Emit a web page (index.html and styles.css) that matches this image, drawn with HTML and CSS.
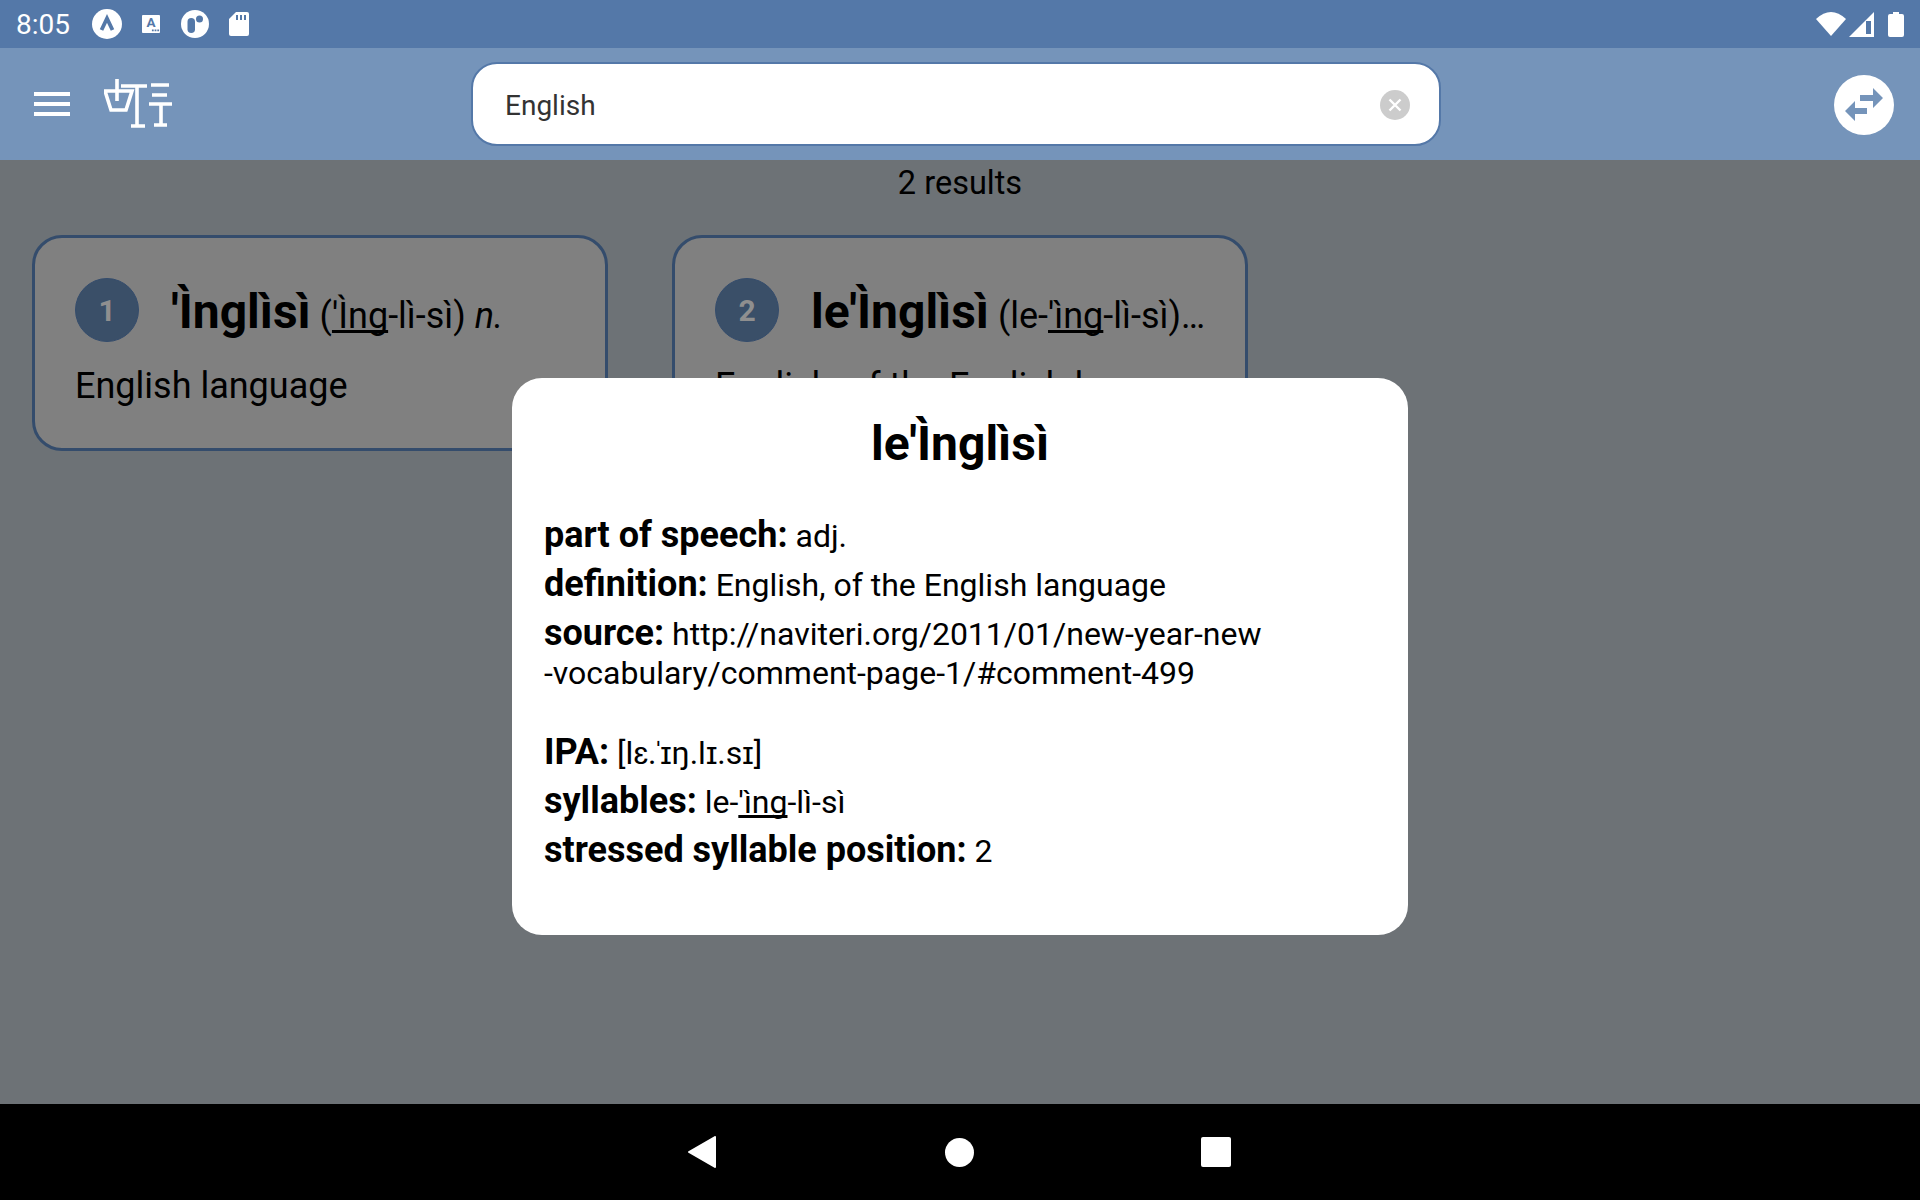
FILE: index.html
```html
<!DOCTYPE html>
<html lang="en">
<head>
  <meta charset="UTF-8">
  <title>Dictionary search</title>
  <link rel="stylesheet" href="styles.css">
</head>
<body>

<div class="statusbar">
  <span class="clock">8:05</span>
  <svg class="st-icon st-a" viewBox="0 0 30 30"><circle cx="15" cy="15" r="15" fill="#fff"/><path d="M9.500 21L15 9.500L20.500 21" fill="none" stroke="#5478a8" stroke-width="3.800"/></svg>
  <svg class="st-icon st-b" viewBox="0 0 20 20"><rect width="20" height="20" rx="1" fill="#fff"/><text x="10" y="13.500" class="st-letter">A</text><path d="M11 16h2v2h-2zM14 16h2v2h-2zM17 16h2v2h-2z" fill="#5478a8"/></svg>
  <svg class="st-icon st-c" viewBox="0 0 28 28"><circle cx="14" cy="14" r="14" fill="#fff"/><rect x="6.500" y="8" width="7.500" height="15" rx="3.750" fill="#5478a8"/><circle cx="18.500" cy="9" r="3.500" fill="#5478a8"/></svg>
  <svg class="st-icon st-d" viewBox="0 0 20 24"><path d="M7 0H18Q20 0 20 2V22Q20 24 18 24H2Q0 24 0 22V7Z" fill="#fff"/><path d="M7 3h2v5H7zM11 3h2v5h-2zM15 3h2v5h-2z" fill="#5478a8"/></svg>
  <span class="status-gap"></span>
  <svg class="st-icon st-wifi" viewBox="0 0 30 24"><path d="M0 7Q15 -7 30 7L15 24Z" fill="#fff"/></svg>
  <svg class="st-icon st-signal" viewBox="0 0 25 25"><path d="M25 0V25H0Z" fill="#fff"/><path d="M17 9H22V22H17Z" fill="#5478a8"/></svg>
  <svg class="st-icon st-battery" viewBox="0 0 16 25"><path d="M5 0H11V2H14Q16 2 16 4V23Q16 25 14 25H2Q0 25 0 23V4Q0 2 2 2H5Z" fill="#fff"/></svg>
</div>

<header class="appbar">
  <button class="menu-btn" aria-label="menu"><span></span><span></span><span></span></button>
  <svg class="logo" viewBox="0 0 70 50"><path d="M1 12H28L22 31H7ZM13 0V22M17 7H43M33 7V47M27 47H41M47 6H65M48 16H63M45 25H68M57 25V46M50 46H63" fill="none" stroke="#fff" stroke-width="3.600"/></svg>
  <div class="search">
    <span class="search-text">English</span>
    <svg class="clear" viewBox="0 0 30 30"><circle cx="15" cy="15" r="15" fill="#ccc"/><path d="M9.500 9.500L20.500 20.500M20.500 9.500L9.500 20.500" stroke="#fff" stroke-width="2.400"/></svg>
  </div>
  <svg class="swap" viewBox="0 0 60 60"><circle cx="30" cy="30" r="30" fill="#fff"/><path d="M26 20H39V13L49 23L39 33V26H26ZM33 33H21V26L11 36L21 46V39H33Z" fill="#7594ba"/></svg>
</header>

<main class="content">
  <p class="count">2 results</p>
  <div class="cards">
    <div class="card">
      <div class="card-head">
        <span class="num">1</span>
        <div class="head-text"><b class="word">'Ìnglìsì</b> (<u>'Ìng</u>-lì-sì) <i>n.</i></div>
      </div>
      <p class="gloss">English language</p>
    </div>
    <div class="card">
      <div class="card-head">
        <span class="num">2</span>
        <div class="head-text"><b class="word">le'Ìnglìsì</b> (le-<u>'ìng</u>-lì-sì)…</div>
      </div>
      <p class="gloss">English, of the English langua…</p>
    </div>
  </div>

  <div class="modal">
    <h2 class="modal-title">le'Ìnglìsì</h2>
    <div class="block">
      <p class="row"><b>part of speech:</b> adj.</p>
      <p class="row"><b>definition:</b> English, of the English language</p>
      <p class="row"><b>source:</b> http://naviteri.org/2011/01/new-year-new<br>-vocabulary/comment-page-1/#comment-499</p>
    </div>
    <div class="block">
      <p class="row"><b>IPA:</b> [lɛ.<span class="stress">ˈ</span>ɪŋ.lɪ.sɪ]</p>
      <p class="row"><b>syllables:</b> le-<u>'ìng</u>-lì-sì</p>
      <p class="row"><b>stressed syllable position:</b> 2</p>
    </div>
  </div>
</main>

<nav class="navbar">
  <svg class="nav-back" viewBox="0 0 28 32"><path d="M27 1V31L1 16Z" fill="#fff" stroke="#fff" stroke-width="2" stroke-linejoin="round"/></svg>
  <span class="nav-home"></span>
  <span class="nav-recent"></span>
</nav>

</body>
</html>
```

FILE: styles.css
```css
body {
  margin: 0;
  width: 1920px;
  height: 1200px;
  display: flex;
  flex-direction: column;
  overflow: hidden;
  font-family: "Roboto", sans-serif;
  color: #000;
}
p {
  margin: 0;
}

.statusbar {
  height: 48px;
  background: #5478a8;
  display: flex;
  align-items: center;
  padding: 0 16px;
  flex: none;
}
.clock {
  color: #fff;
  font-size: 28px;
  width: 76px;
}
.st-icon {
  display: block;
}
.st-a { width: 30px; height: 30px; margin-right: 20px; }
.st-b { width: 18px; height: 20px; margin-right: 21px; }
.st-c { width: 28px; height: 28px; margin-right: 20px; }
.st-d { width: 20px; height: 24px; }
.status-gap { flex: 1; }
.st-wifi { width: 30px; height: 24px; margin-right: 3px; }
.st-signal { width: 25px; height: 25px; margin-right: 14px; }
.st-battery { width: 16px; height: 25px; }
.st-letter {
  font-size: 15px;
  font-weight: 700;
  fill: #5478a8;
  text-anchor: middle;
}

.appbar {
  height: 112px;
  background: #7594ba;
  display: flex;
  align-items: center;
  position: relative;
  flex: none;
}
.menu-btn {
  background: none;
  border: none;
  padding: 0;
  margin-left: 34px;
  width: 36px;
  display: flex;
  flex-direction: column;
  gap: 6px;
}
.menu-btn span {
  display: block;
  height: 4px;
  background: #fff;
}
.logo {
  width: 70px;
  height: 50px;
  margin-left: 34px;
}
.search {
  margin-left: 297px;
  width: 970px;
  height: 84px;
  box-sizing: border-box;
  background: #fff;
  border: 2px solid #5478a8;
  border-radius: 26px;
  display: flex;
  align-items: center;
  padding: 0 29px 0 32px;
}
.search-text {
  flex: 1;
  font-size: 28px;
  color: #333;
  padding-top: 2px;
}
.clear {
  width: 30px;
  height: 30px;
  margin-top: 2px;
}
.swap {
  width: 60px;
  height: 60px;
  position: absolute;
  right: 26px;
  top: 27px;
}

.content {
  flex: 1;
  background: #6d7276;
  position: relative;
}
.count {
  text-align: center;
  font-size: 32.500px;
  line-height: 38px;
  padding-top: 4px;
}
.cards {
  display: flex;
  gap: 64px;
  padding: 33px 32px 0;
}
.card {
  width: 576px;
  height: 216px;
  box-sizing: border-box;
  background: #808080;
  border: 3px solid #344c6c;
  border-radius: 30px;
  padding: 40px 40px 0;
}
.card-head {
  display: flex;
  align-items: center;
}
.num {
  flex: none;
  width: 64px;
  height: 64px;
  box-sizing: border-box;
  border-radius: 50%;
  background: #3a4f68;
  border: 1px solid #344c6c;
  color: #8f8f8f;
  font-size: 30px;
  font-weight: 700;
  display: flex;
  align-items: center;
  justify-content: center;
}
.head-text {
  margin-left: 32px;
  padding-top: 2px;
  font-size: 36px;
  white-space: nowrap;
}
.word {
  font-size: 48px;
}
u {
  text-decoration-skip-ink: none;
}
.gloss {
  font-size: 36px;
  margin-top: 23px;
  white-space: nowrap;
}

.modal {
  position: absolute;
  left: 512px;
  top: 218px;
  width: 896px;
  height: 557px;
  box-sizing: border-box;
  background: #fff;
  border-radius: 30px;
  padding: 37px 32px 0;
}
.modal-title {
  margin: 0 0 44px;
  text-align: center;
  font-size: 48px;
  font-weight: 700;
}
.block {
  margin-bottom: 40px;
}
.row {
  font-size: 32px;
  line-height: 39px;
  margin-bottom: 9px;
}
.row b {
  font-size: 36px;
}
.stress {
  margin: 0 -3.500px;
}

.navbar {
  height: 96px;
  background: #000;
  position: relative;
  display: flex;
  align-items: center;
  flex: none;
}
.nav-back {
  width: 28px;
  height: 32px;
  margin-left: 688px;
}
.nav-home {
  width: 29px;
  height: 29px;
  border-radius: 50%;
  background: #fff;
  margin-left: 229px;
}
.nav-recent {
  width: 30px;
  height: 30px;
  border-radius: 2px;
  background: #fff;
  margin-left: 227px;
}
```
